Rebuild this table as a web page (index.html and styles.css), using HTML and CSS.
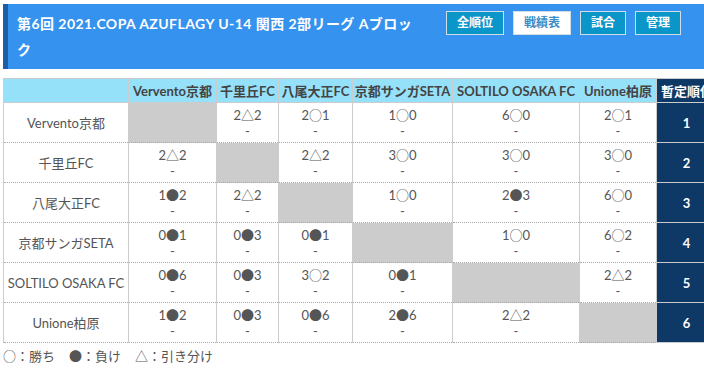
FILE: index.html
```html
<!DOCTYPE html>
<html lang="ja">
<head>
<meta charset="utf-8">
<title>戦績表</title>
<link rel="stylesheet" href="styles.css">
</head>
<body>
<div class="page">
  <header class="bar">
    <h1 class="title">第6回 2021.COPA AZUFLAGY U-14 関西 2部リーグ Aブロック</h1>
    <nav class="tabs">
      <a class="tab">全順位</a>
      <a class="tab active">戦績表</a>
      <a class="tab">試合</a>
      <a class="tab">管理</a>
    </nav>
  </header>
  <div class="scroller">
    <table class="grid">
      <colgroup>
        <col class="c0"><col class="c1"><col class="c2"><col class="c3"><col class="c4"><col class="c5"><col class="c6"><col class="c7">
      </colgroup>
      <thead>
        <tr>
          <th></th>
          <th>Vervento京都</th>
          <th>千里丘FC</th>
          <th>八尾大正FC</th>
          <th>京都サンガSETA</th>
          <th>SOLTILO OSAKA FC</th>
          <th>Unione柏原</th>
          <th class="rank-h">暫定順位</th>
        </tr>
      </thead>
      <tbody>
        <tr>
          <th class="team">Vervento京都</th>
          <td class="self"></td>
          <td>2<span class="m">△</span>2<br>-</td>
          <td>2<span class="m">○</span>1<br>-</td>
          <td>1<span class="m">○</span>0<br>-</td>
          <td>6<span class="m">○</span>0<br>-</td>
          <td>2<span class="m">○</span>1<br>-</td>
          <td class="rank">1</td>
        </tr>
        <tr>
          <th class="team">千里丘FC</th>
          <td>2<span class="m">△</span>2<br>-</td>
          <td class="self"></td>
          <td>2<span class="m">△</span>2<br>-</td>
          <td>3<span class="m">○</span>0<br>-</td>
          <td>3<span class="m">○</span>0<br>-</td>
          <td>3<span class="m">○</span>0<br>-</td>
          <td class="rank">2</td>
        </tr>
        <tr>
          <th class="team">八尾大正FC</th>
          <td>1<span class="m">●</span>2<br>-</td>
          <td>2<span class="m">△</span>2<br>-</td>
          <td class="self"></td>
          <td>1<span class="m">○</span>0<br>-</td>
          <td>2<span class="m">●</span>3<br>-</td>
          <td>6<span class="m">○</span>0<br>-</td>
          <td class="rank">3</td>
        </tr>
        <tr>
          <th class="team">京都サンガSETA</th>
          <td>0<span class="m">●</span>1<br>-</td>
          <td>0<span class="m">●</span>3<br>-</td>
          <td>0<span class="m">●</span>1<br>-</td>
          <td class="self"></td>
          <td>1<span class="m">○</span>0<br>-</td>
          <td>6<span class="m">○</span>2<br>-</td>
          <td class="rank">4</td>
        </tr>
        <tr>
          <th class="team">SOLTILO OSAKA FC</th>
          <td>0<span class="m">●</span>6<br>-</td>
          <td>0<span class="m">●</span>3<br>-</td>
          <td>3<span class="m">○</span>2<br>-</td>
          <td>0<span class="m">●</span>1<br>-</td>
          <td class="self"></td>
          <td>2<span class="m">△</span>2<br>-</td>
          <td class="rank">5</td>
        </tr>
        <tr>
          <th class="team">Unione柏原</th>
          <td>1<span class="m">●</span>2<br>-</td>
          <td>0<span class="m">●</span>3<br>-</td>
          <td>0<span class="m">●</span>6<br>-</td>
          <td>2<span class="m">●</span>6<br>-</td>
          <td>2<span class="m">△</span>2<br>-</td>
          <td class="self"></td>
          <td class="rank">6</td>
        </tr>
      </tbody>
    </table>
    <p class="legend"><span class="key"><span class="m">○</span>：勝ち</span><span class="key"><span class="m">●</span>：負け</span><span class="key"><span class="m">△</span>：引き分け</span></p>
  </div>
</div>
</body>
</html>
```

FILE: styles.css
```css
html, body {
  margin: 0;
  padding: 0;
  overflow: hidden;
  background: #fff;
}
body {
  font-family: Lato, "Noto Sans CJK JP", sans-serif;
  color: #555;
  font-size: 13px;
}
.page {
  padding: 4px 0 0 3px;
}
.bar {
  display: flex;
  align-items: flex-start;
  justify-content: space-between;
  background: #3592ee;
  border-left: 5px solid #1b5ea8;
  padding: 0 23px 0 9px;
}
.title {
  margin: 0;
  flex: 0 0 400px;
  padding: 7px 0 6px;
  font-size: 14px;
  line-height: 26px;
  font-weight: 700;
  letter-spacing: 0.45px;
  color: #fff;
}
.tabs {
  display: flex;
  gap: 9px;
  padding-top: 7px;
}
.tab {
  display: block;
  height: 24px;
  box-sizing: border-box;
  padding: 0 10px;
  border: 1px solid #cfdde6;
  background: #0a96c9;
  color: #fff;
  font-weight: 700;
  font-size: 12px;
  line-height: 22px;
}
.tab.active {
  background: #fff;
  color: #3a8dc6;
}
.scroller {
  margin: 9px 0 0 -3px;
  padding-left: 3px;
  overflow-x: scroll;
}
.scroller::-webkit-scrollbar {
  height: 15px;
}
.scroller::-webkit-scrollbar-track {
  background: #f1f1f1;
}
.scroller::-webkit-scrollbar-thumb {
  background: #c8c8c8;
  border-left: 20px solid #f1f1f1;
  border-right: 36px solid #f1f1f1;
  border-top: 2px solid #f1f1f1;
}
.grid {
  border-collapse: collapse;
  table-layout: fixed;
  width: 713px;
}
.c0 { width: 125px; }
.c1 { width: 88px; }
.c2 { width: 62px; }
.c3 { width: 74px; }
.c4 { width: 100px; }
.c5 { width: 127px; }
.c6 { width: 77px; }
.c7 { width: 60px; }
.grid th, .grid td {
  border-left: 1px solid #ccc;
  border-right: 1px solid #ccc;
  border-top: 1px dotted #aaa;
  border-bottom: 1px dotted #aaa;
  text-align: center;
  padding: 0;
}
.grid thead th {
  background: #96e1fa;
  color: #444;
  font-weight: 700;
  height: 23px;
  border-top: 1px solid #ccc;
  border-bottom: 1px solid #ccc;
  white-space: nowrap;
}
.grid thead th.rank-h {
  background: #0e3866;
  color: #fff;
  text-align: left;
  padding-left: 4px;
}
.grid .team {
  font-weight: 400;
  color: #555;
  white-space: nowrap;
  vertical-align: middle;
}
.grid td {
  height: 32px;
  padding: 4px 0 3px;
  line-height: 16px;
  color: #555;
  vertical-align: top;
}
.grid td.self {
  background: #ccc;
}
.grid td.rank {
  background: #0e3866;
  color: #fff;
  font-weight: 700;
  vertical-align: middle;
  border-top: 1px solid #ccc;
  border-bottom: 1px solid #ccc;
}
.m {
  font-family: "Noto Sans CJK JP", sans-serif;
  color: #555;
}
.legend {
  margin: 5px 0 3px;
  line-height: 16px;
  white-space: nowrap;
}
.key {
  margin-right: 14px;
}
```
